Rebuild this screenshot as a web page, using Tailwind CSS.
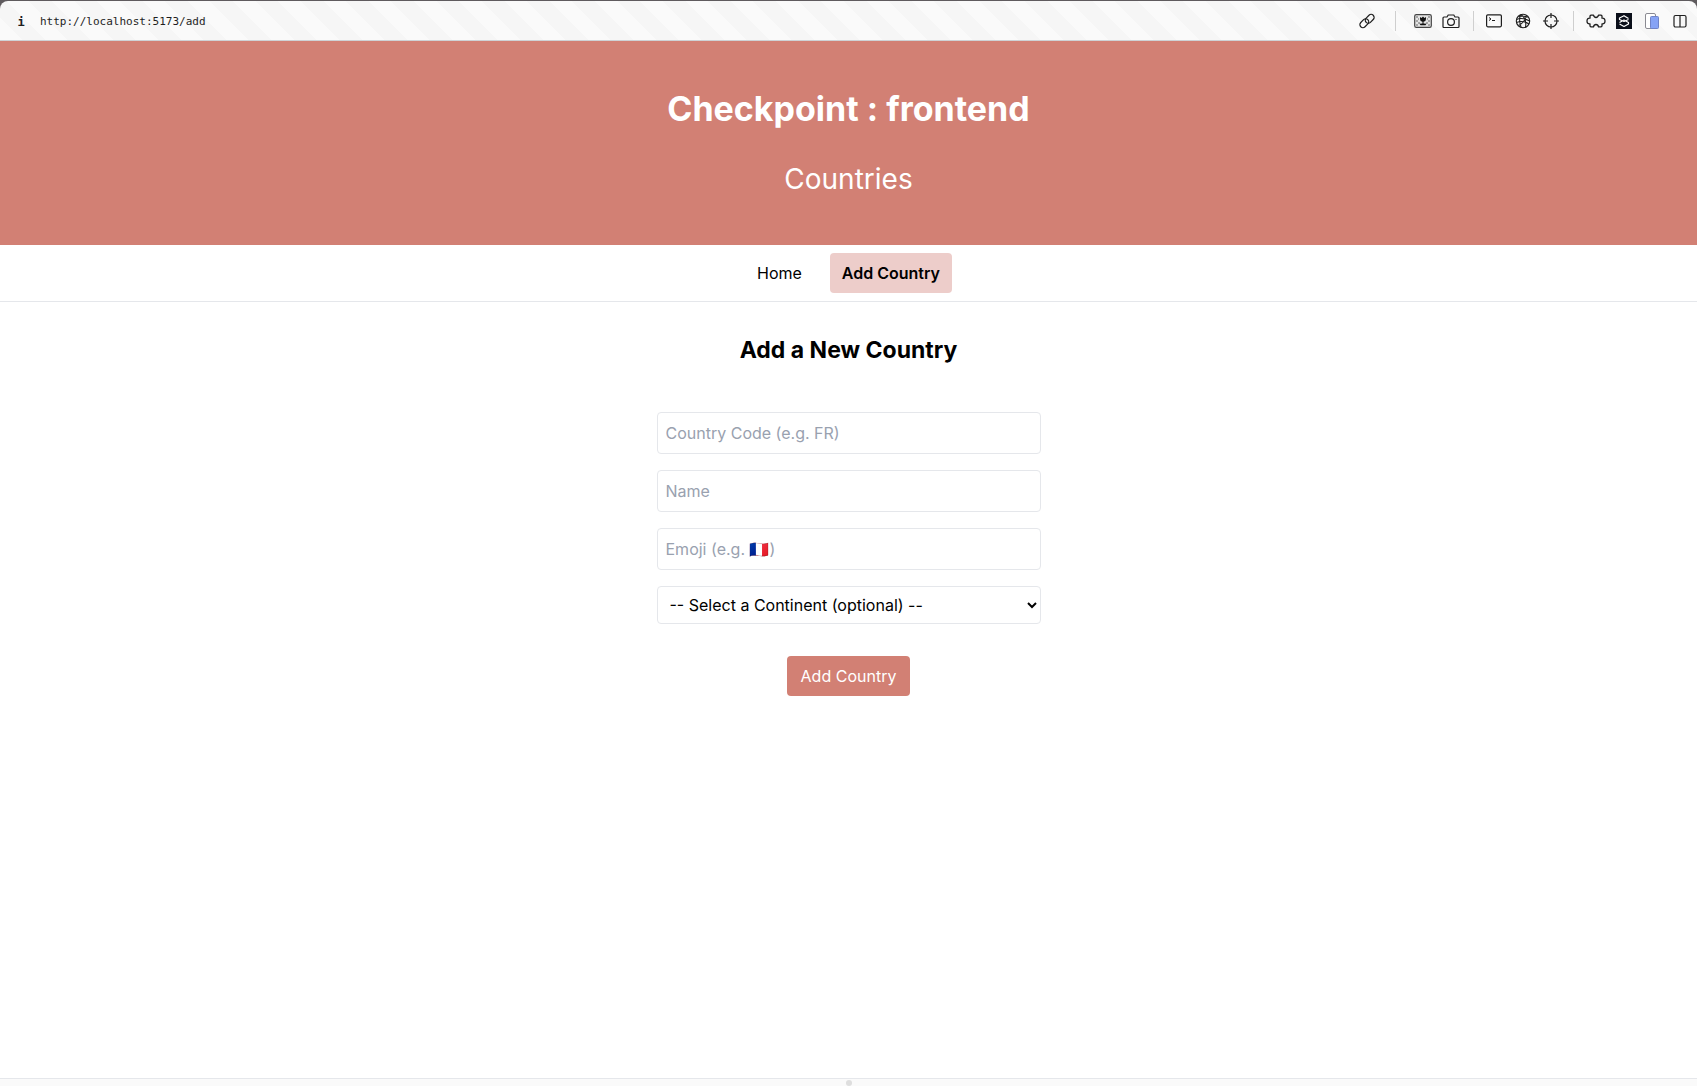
<!DOCTYPE html>
<html lang="en">
<head>
<meta charset="utf-8">
<title>Countries</title>
<script src="https://cdn.jsdelivr.net/npm/@tailwindcss/browser@4"></script>
</head>
<body class="flex min-h-screen flex-col bg-[#5f5b5e] font-['Inter',sans-serif] text-base text-black">

<div class="mt-px flex h-10 items-center justify-between rounded-t-lg border-b border-[#cfd3d6] bg-[repeating-linear-gradient(45deg,#fafafa_0_16px,#f6f6f6_16px_32px)] pl-[15px]">
  <div class="flex items-center gap-[13px] pt-0.5">
    <button type="button" aria-label="Site information" class="w-3 font-['DejaVu_Sans_Mono',monospace] text-xs leading-4 font-bold text-[#1e1e1e]">i</button>
    <input aria-label="Address" value="http://localhost:5173/add" class="w-96 font-['DejaVu_Sans_Mono',monospace] text-[11px] leading-4 text-[#1e1e1e] outline-none">
  </div>
  <div class="flex items-center pr-[9px] text-[#1e1e1e]">
    <button type="button" aria-label="Copy link" class="mr-5">
      <svg class="size-4" viewBox="0 0 16 16" fill="none" stroke="currentColor" stroke-width="1.2"><rect x="-5" y="-3" width="10" height="6" rx="3" transform="translate(5.300 10.200) rotate(-45)"/><rect x="-5" y="-3" width="10" height="6" rx="3" transform="translate(10.700 5.800) rotate(-45)"/></svg>
    </button>
    <span class="h-5 w-px bg-[#cfcfcf]"></span>
    <button type="button" aria-label="Toggle images" class="ml-4.5">
      <svg class="h-4 w-[18px]" viewBox="0 0 18 16" fill="none"><rect x=".7" y="1.7" width="16.6" height="12.6" rx="1.6" fill="#e4e4e4" stroke="#444" stroke-width="1.2"/><path d="M2 3h2v2H2zM14 3h2v2h-2zM4 5h1v2H4zM13 5h1v2h-1zM2 7h2v2H2zM14 7h2v2h-2zM4 9h2v2H4zM12 9h2v2h-2zM2 11h2v2H2zM14 11h2v2h-2z" fill="#a5a5a5"/><path d="M6 4l1.500 1L9 3.600 10.500 5 12 4v2Q12 8.500 9.500 8.800v1.700l3 .2-1 1.600h-5l-1-1.600 3-.2V8.800Q6 8.500 6 6z" fill="#111"/></svg>
    </button>
    <button type="button" aria-label="Screenshot" class="ml-2.5">
      <svg class="h-4 w-[18px]" viewBox="0 0 18 16" fill="none" stroke="currentColor" stroke-width="1.2"><path d="M2 4h3l1.200-2h5.600L13 4h3q1 0 1 1v8.500q0 1-1 1H2q-1 0-1-1V5q0-1 1-1z"/><circle cx="9" cy="9" r="3.400"/><path d="M13.500 6.500h1"/></svg>
    </button>
    <span class="ml-[13px] h-5 w-px bg-[#cfcfcf]"></span>
    <button type="button" aria-label="Console" class="ml-3">
      <svg class="size-4" viewBox="0 0 16 16" fill="none" stroke="currentColor" stroke-width="1.200"><rect x=".6" y="1.800" width="14.800" height="12" rx="1.200"/><path d="M3 4.500l2 1.500L3 7.500M6 7.500h3" stroke-width="1"/></svg>
    </button>
    <button type="button" aria-label="Network" class="ml-[13px]">
      <svg class="size-4" viewBox="0 0 16 16" fill="none" stroke="currentColor" stroke-width="1.100"><circle cx="8" cy="8" r="6.700"/><path d="M5.500 1.800Q3.500 7 6 14M6 1.500q6 4 4.500 12.800M1.500 6.500Q7 4 14.500 8M1.500 9.500Q8 7 14 11M3.500 3.500Q8 2.500 13 4M11.500 2.500Q10 9 3.500 12.500"/></svg>
    </button>
    <button type="button" aria-label="Inspect" class="ml-3">
      <svg class="size-4" viewBox="0 0 16 16" fill="none" stroke="currentColor" stroke-width="1.200"><circle cx="8" cy="8" r="6"/><path d="M8 0v5M8 11v5M0 8h5M11 8h5"/></svg>
    </button>
    <span class="ml-3.5 h-5 w-px bg-[#cfcfcf]"></span>
    <button type="button" aria-label="Extensions" class="ml-3">
      <svg class="h-4 w-5" viewBox="0 0 20 16" fill="none" stroke="currentColor" stroke-width="1.300" stroke-linejoin="round"><path d="M5 2.200h2.500Q8 4.500 10 4.500t2.500-2.300H15q1 0 1 1v2q3-.4 3 2.800t-3 2.800v2q0 1-1 1h-2.500Q12 11.500 10 11.500t-2.500 2.300H5q-1 0-1-1v-2Q1 11.200 1 8t3-2.800v-2q0-1 1-1z"/></svg>
    </button>
    <button type="button" aria-label="Extension" class="ml-2.5">
      <svg class="size-4" viewBox="0 0 16 16" fill="none"><path fill="#0b0f1a" d="M0 0h16v16H0z"/><path d="M12.500 5.500L8 2.700 3.500 5v1.500L8 8.500l4.500-2M3.500 9.500L8 7l4.500 2.500V11L8 13.500 3.500 11" stroke="#fff" stroke-width="1.200" stroke-linejoin="round"/></svg>
    </button>
    <button type="button" aria-label="Device preview" class="ml-3">
      <svg class="size-4" viewBox="0 0 16 16" fill="none"><rect x="1.500" y=".5" width="10" height="15" rx="1.500" fill="#fff" stroke="#8a8a92"/><rect x="6.500" y="3.500" width="8" height="12" rx="1" fill="#86a3f5" stroke="#6f83c8"/></svg>
    </button>
    <button type="button" aria-label="Split view" class="ml-3">
      <svg class="size-4" viewBox="0 0 16 16" fill="none" stroke="currentColor" stroke-width="1.200"><rect x="2" y="2.500" width="12" height="11.500" rx="1.500"/><path d="M8 2.500V14"/></svg>
    </button>
  </div>
</div>

<header class="flex flex-col items-center gap-8 bg-[#d28074] py-12 text-white">
  <h1 class="text-[34px] leading-10 font-bold">Checkpoint : frontend</h1>
  <h2 class="text-[28px] leading-9">Countries</h2>
</header>

<nav class="flex justify-center gap-4 border-b border-gray-200 bg-white py-2">
  <a href="#" class="rounded px-3 py-2">Home</a>
  <a href="#" class="rounded bg-[#edcdca] px-3 py-2 font-semibold">Add Country</a>
</nav>

<main class="flex flex-1 flex-col items-center bg-white pt-8">
  <h2 class="text-[23px] leading-8 font-bold">Add a New Country</h2>
  <form class="mt-[46px] flex w-full max-w-sm flex-col items-center gap-4">
    <input aria-label="Country Code" placeholder="Country Code (e.g. FR)" class="w-full rounded border border-gray-200 p-2 placeholder:text-gray-400">
    <input aria-label="Name" placeholder="Name" class="w-full rounded border border-gray-200 p-2 placeholder:text-gray-400">
    <input aria-label="Emoji" placeholder="Emoji (e.g. 🇫🇷)" class="w-full rounded border border-gray-200 p-2 placeholder:text-gray-400">
    <select aria-label="Continent" class="h-[38px] w-full rounded border border-gray-200 bg-white px-2">
      <option>-- Select a Continent (optional) --</option>
    </select>
    <button type="submit" class="mt-4 rounded bg-[#d28074] px-3.5 py-2 text-white">Add Country</button>
  </form>
</main>

<footer class="flex h-2 justify-center border-t border-gray-200 bg-[#fafafa] pt-px">
  <span class="size-1.5 rounded-full bg-[#dedede]"></span>
</footer>
</body>
</html>
